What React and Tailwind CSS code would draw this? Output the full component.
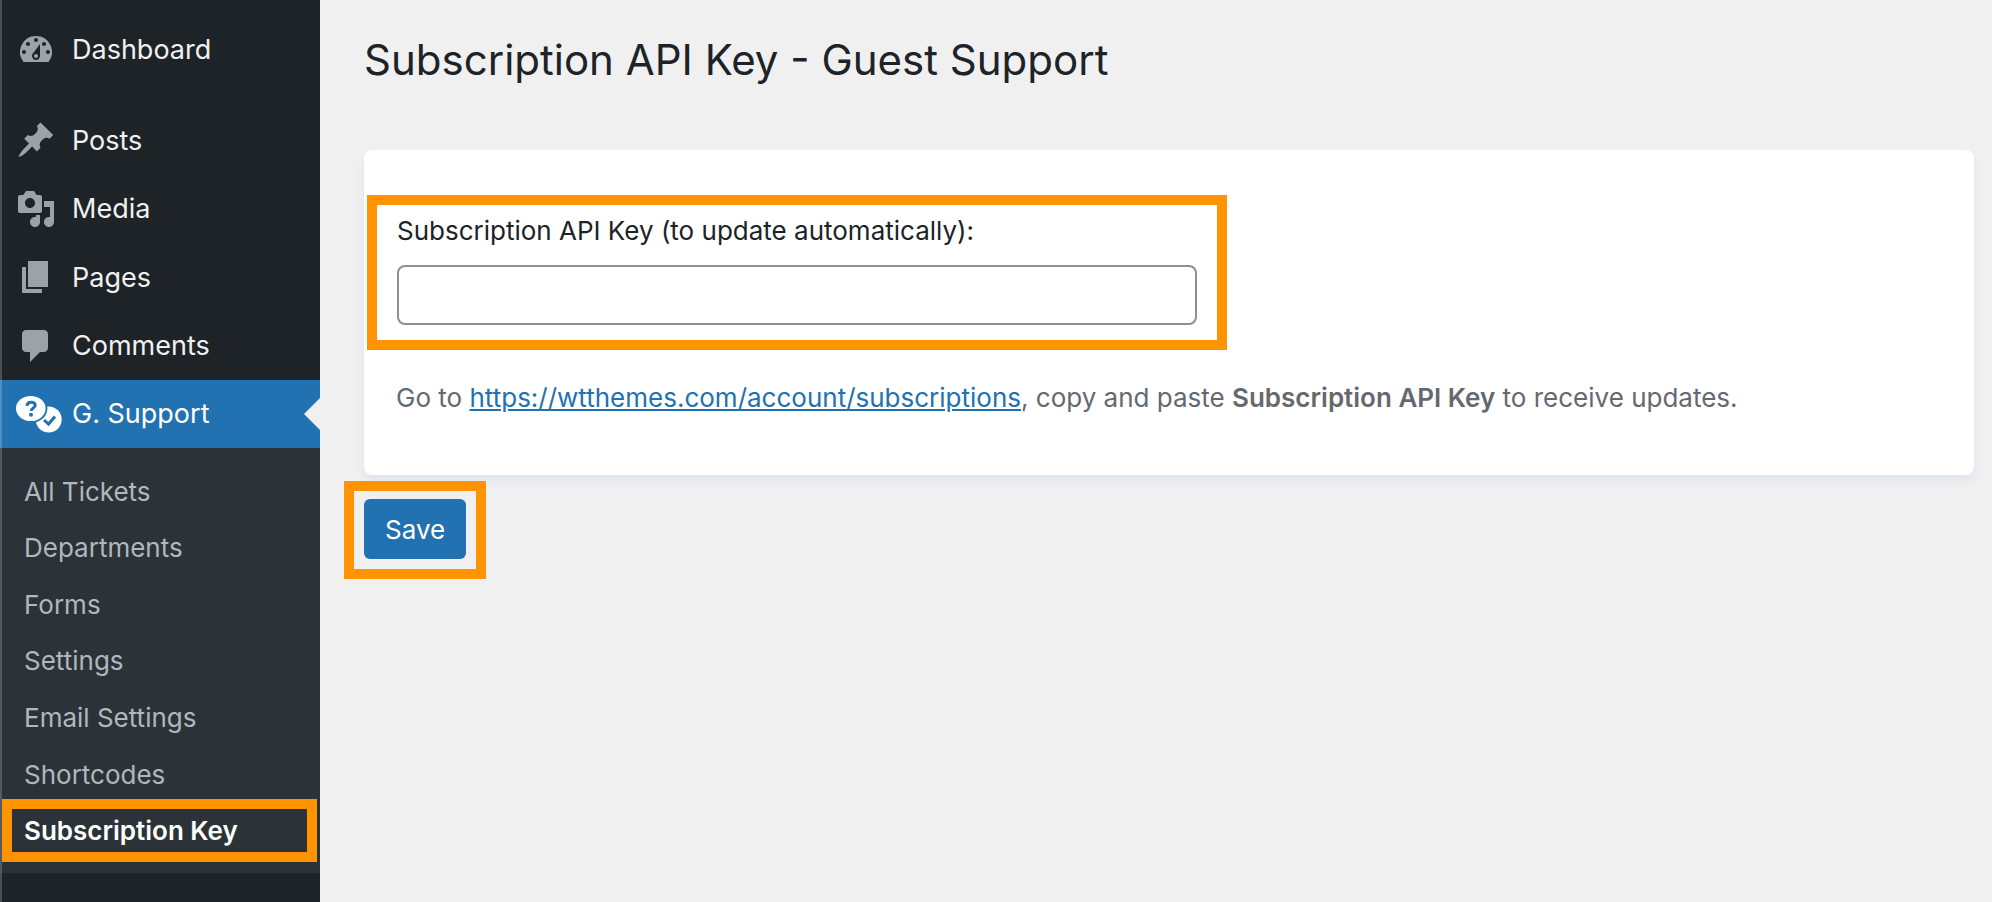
import React from "react";

const menu = [
  { label: "Posts", Icon: PinIcon },
  { label: "Media", Icon: MediaIcon },
  { label: "Pages", Icon: PagesIcon },
  { label: "Comments", Icon: CommentIcon },
];

const submenu = ["All Tickets", "Departments", "Forms", "Settings", "Email Settings", "Shortcodes"];

function DashboardIcon() {
  return (
    <svg viewBox="0 0 20 20" className="size-10 fill-[#9ca2a8]" aria-hidden="true">
      <path fillRule="evenodd" d="M3.76 16h12.48A7.998 7.998 0 0 0 10 3a7.998 7.998 0 0 0-6.24 13zM10 4c.55 0 1 .45 1 1s-.45 1-1 1-1-.45-1-1 .45-1 1-1zM6 6c.55 0 1 .45 1 1s-.45 1-1 1-1-.45-1-1 .45-1 1-1zm8 0c.55 0 1 .45 1 1s-.45 1-1 1-1-.45-1-1 .45-1 1-1zm-5.37 5.55L12 7v6c0 1.1-.9 2-2 2s-2-.9-2-2c0-.57.24-1.08.63-1.45zM4 10c.55 0 1 .45 1 1s-.45 1-1 1-1-.45-1-1 .45-1 1-1zm12 0c.55 0 1 .45 1 1s-.45 1-1 1-1-.45-1-1 .45-1 1-1zm-5 3c0-.55-.45-1-1-1s-1 .45-1 1 .45 1 1 1 1-.45 1-1z" />
    </svg>
  );
}

function PinIcon() {
  return (
    <svg viewBox="0 0 20 20" className="size-10 fill-[#9ca2a8]" aria-hidden="true">
      <path d="M10.44 3.02l1.82-1.82 6.36 6.35-1.83 1.82c-1.05-.68-2.48-.57-3.41.36l-.75.75c-.92.93-1.04 2.35-.35 3.41l-1.83 1.82-2.41-2.41-2.8 2.79c-.42.42-3.38 2.71-3.8 2.29s1.86-3.39 2.28-3.81l2.79-2.79L4.1 9.36l1.83-1.82c1.05.69 2.48.57 3.4-.36l.75-.75c.93-.92 1.05-2.35.36-3.41z" />
    </svg>
  );
}

function MediaIcon() {
  return (
    <svg viewBox="0 0 20 20" className="size-10 fill-[#9ca2a8]" aria-hidden="true">
      <path fillRule="evenodd" d="M13 11V4c0-.55-.45-1-1-1h-1.670L9 1H5L3.670 3H2c-.55 0-1 .45-1 1v7c0 .55.45 1 1 1h10c.55 0 1-.45 1-1zM7 4.500c1.380 0 2.500 1.120 2.500 2.500S8.380 9.500 7 9.500 4.500 8.380 4.500 7 5.620 4.500 7 4.500zM14 6h5v10.500c0 1.380-1.120 2.500-2.500 2.500S14 17.880 14 16.500s1.120-2.500 2.500-2.500c.170 0 .340.020.500.050V9h-3V6zm-4 8.050V13h2v3.500c0 1.380-1.120 2.500-2.500 2.500S7 17.880 7 16.500 8.120 14 9.500 14c.170 0 .340.020.500.050z" />
    </svg>
  );
}

function PagesIcon() {
  return (
    <svg viewBox="0 0 20 20" className="size-10 fill-[#9ca2a8]" aria-hidden="true">
      <path d="M6 15V2h10v13H6zm-1 1h8v2H3V5h2v11z" />
    </svg>
  );
}

function CommentIcon() {
  return (
    <svg viewBox="0 0 20 20" className="size-10 fill-[#9ca2a8]" aria-hidden="true">
      <path d="M5 2h9c1.100 0 2 .9 2 2v7c0 1.100-.9 2-2 2h-2l-5 5v-5H5c-1.100 0-2-.9-2-2V4c0-1.100.9-2 2-2z" />
    </svg>
  );
}

function SupportIcon() {
  return (
    <svg viewBox="0 0 48 38" className="h-[38px] w-12" aria-hidden="true">
      <circle cx="32.700" cy="24.500" r="13" fill="#fff" />
      <path d="M28 25l4.500 4 6.500-7.500" fill="none" stroke="#2271b1" strokeWidth="3" />
      <ellipse cx="14.800" cy="13.500" rx="16.600" ry="14.600" fill="#2271b1" />
      <ellipse cx="14.800" cy="13.500" rx="14.800" ry="12.600" fill="#fff" />
      <path d="M11 10.800c.2-2.400 1.800-3.500 4.200-3.500 2.400 0 4 1.100 4 3 0 2.700-3.900 2.700-4 5.700" fill="none" stroke="#2271b1" strokeWidth="3" />
      <circle cx="15" cy="19.800" r="2" fill="#2271b1" />
    </svg>
  );
}

function MenuLink({ label, Icon }) {
  return (
    <a href="#" className="flex flex-1 items-center gap-4 pl-4 text-[27px] text-[#f0f0f1]">
      <Icon />
      <span className="pt-px">{label}</span>
    </a>
  );
}

function Sidebar() {
  return (
    <nav className="relative flex w-80 shrink-0 flex-col bg-[#1d2327]">
      <div className="mt-4 flex h-[68px]">
        <MenuLink label="Dashboard" Icon={DashboardIcon} />
      </div>
      <div className="mt-[22px] flex h-[274px] flex-col">
        {menu.map((item) => (
          <MenuLink key={item.label} {...item} />
        ))}
      </div>
      <a href="#" className="flex h-[68px] items-center justify-between bg-[#2271b1] pl-4 text-[27px] text-white">
        <span className="flex items-center gap-2">
          <SupportIcon />
          <span className="pt-px">G. Support</span>
        </span>
        <svg viewBox="0 0 16 32" className="h-8 w-4 fill-[#f0f0f1]" aria-hidden="true">
          <path d="M16 0v32L0 16z" />
        </svg>
      </a>
      <div className="bg-[#2c3338] pt-[15px] pb-[14px]">
        <ul className="grid h-[396px] grid-rows-7 text-[26px] text-[#b0b7be]">
          {submenu.map((label) => (
            <li key={label} className="flex">
              <a href="#" className="flex flex-1 items-center pl-6">{label}</a>
            </li>
          ))}
          <li className="relative flex">
            <a href="#" aria-current="page" className="flex flex-1 items-center pl-6 font-semibold text-white">
              Subscription Key
            </a>
            <span className="pointer-events-none absolute -inset-y-[3px] right-[3px] left-0.5 border-10 border-[#ff9400]" />
          </li>
        </ul>
      </div>
      <span className="pointer-events-none absolute inset-y-0 left-0 w-0.5 bg-white/20" />
    </nav>
  );
}

export default function App() {
  return (
    <div className="flex min-h-screen bg-[#f0f0f1] font-['Inter',sans-serif] text-[#1d2327]">
      <Sidebar />
      <main className="min-w-0 flex-1 pr-[18px] pl-11">
        <h1 className="pt-8 text-[42px] leading-[56px]">Subscription API Key - Guest Support</h1>
        <form onSubmit={(e) => e.preventDefault()}>
          <section className="mt-[62px] rounded-lg bg-white pt-[45px] pr-8 pb-[57px] pl-[3px] shadow-[0_6px_10px_#dfe5ec]">
            <div className="max-w-[860px] border-10 border-[#ff9400] px-5 pt-[10px] pb-[15px]">
              <label htmlFor="api-key" className="mb-[18px] block text-[26px] leading-8">
                Subscription API Key (to update automatically):
              </label>
              <input
                id="api-key"
                type="text"
                className="block h-[60px] w-full rounded-lg border-2 border-[#8c8f94] bg-white px-4 text-[26px]"
              />
            </div>
            <p className="mt-7 pl-[29px] text-[26px] leading-10 text-[#646970]">
              Go to{" "}
              <a href="https://wtthemes.com/account/subscriptions" className="text-[#2271b1] underline">
                https://wtthemes.com/account/subscriptions
              </a>
              , copy and paste <strong className="font-semibold">Subscription API Key</strong> to receive updates.
            </p>
          </section>
          <div className="relative mt-6 inline-flex">
            <button type="submit" className="h-[60px] rounded-md bg-[#2271b1] px-[21px] text-[26px] text-white">
              Save
            </button>
            <span className="pointer-events-none absolute -inset-x-5 -top-[18px] -bottom-5 border-10 border-[#ff9400]" />
          </div>
        </form>
      </main>
    </div>
  );
}
